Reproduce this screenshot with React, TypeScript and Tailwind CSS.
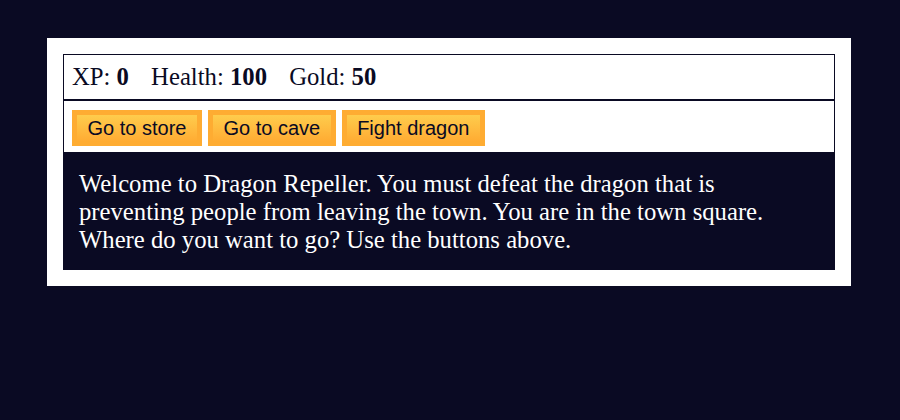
import React from 'react'

const buttons = ['Go to store', 'Go to cave', 'Fight dragon']

const App = () => {
  return (
    <div className="min-h-screen bg-[#0a0a23] pt-[38px] font-['Liberation_Serif',serif]">
      <div className="ml-[47px] w-[804px] bg-white p-4 text-white">
        {/* stats */}
        <div className="border border-[#0a0a23] p-2 text-[24.7px] leading-[28px] text-[#0a0a23]">
          <span className="pr-4">
            XP: <strong>0</strong>
          </span>{' '}
          <span className="pr-4">
            Health: <strong>100</strong>
          </span>{' '}
          <span className="pr-4">
            Gold: <strong>50</strong>
          </span>
        </div>

        {/* controls */}
        <div className="flex gap-[6px] border border-[#0a0a23] pt-[9px] pb-[6px] pl-2">
          {buttons.map((label) => (
            <button
              key={label}
              className="h-[36px] cursor-pointer border-[5px] border-[#feac32] bg-linear-to-b from-[#fecc4c] to-[#ffac33] px-[10.5px] font-['Liberation_Sans',Arial,sans-serif] text-[20px] leading-[23px] text-[#0a0a23]"
            >
              {label}
            </button>
          ))}
        </div>

        {/* text */}
        <div className="bg-[#0a0a23] px-4 pt-[17px] pb-4 text-[24.7px] leading-[28px] text-white">
          Welcome to Dragon Repeller. You must defeat the dragon that is preventing people from leaving the town. You are in the town square. Where do you want to go? Use the buttons above.
        </div>
      </div>
    </div>
  )
}

export default App
